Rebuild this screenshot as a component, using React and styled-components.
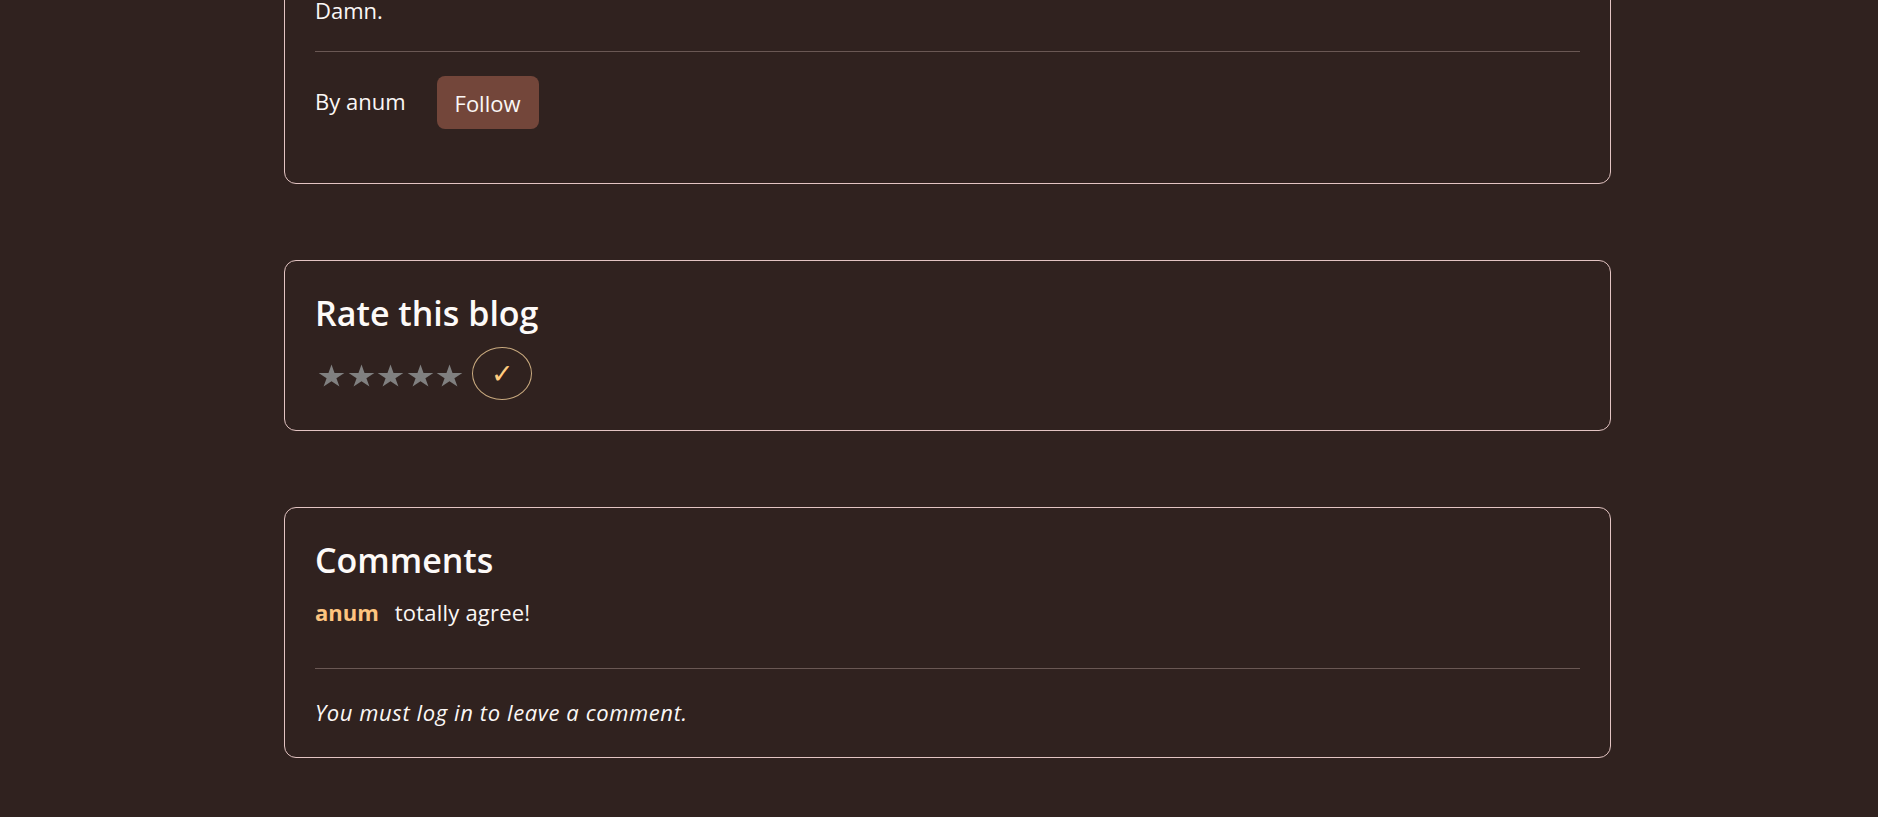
import React from "react";
import styled, { createGlobalStyle } from "styled-components";

const Global = createGlobalStyle`
  html, body {
    margin: 0;
    padding: 0;
    background: #30221f;
  }
  body {
    font-family: "Open Sans", "Noto Sans", "DejaVu Sans", sans-serif;
    color: #fbf7f5;
    font-size: 22px;
    line-height: 30px;
  }
`;

const Page = styled.main`
  display: flex;
  flex-direction: column;
  gap: 76px;
  width: 1327px;
  margin-left: 284px;
  padding-bottom: 60px;
`;

const Card = styled.section`
  box-sizing: border-box;
  border: 1px solid #e3c4c2;
  border-radius: 12px;
  padding: 30px;
  display: flex;
  flex-direction: column;
  margin-top: ${(p) => (p.$scrolled ? "-36px" : "0")};
`;

const BodyText = styled.p`
  margin: ${(p) => p.$margin || "0"};
  font-size: 22px;
  line-height: 30px;
  font-style: ${(p) => (p.$italic ? "italic" : "normal")};
  letter-spacing: ${(p) => (p.$italic ? "0.6px" : "normal")};
`;

const Divider = styled.hr`
  border: 0;
  height: 1px;
  background: #6a5854;
  margin: ${(p) => p.$margin};
`;

const AuthorRow = styled.div`
  display: flex;
  align-items: center;
  gap: 31px;
  margin: 24px 0 24px;
`;

const ByLine = styled.span`
  font-size: 22px;
  line-height: 30px;
  margin-bottom: 4px;
`;

const FollowButton = styled.button`
  font-family: inherit;
  font-size: 22px;
  line-height: 30px;
  color: #fbf7f5;
  background: #73463a;
  border: 0;
  border-radius: 8px;
  padding: 12px 18px 11px;
  cursor: pointer;
`;

const Heading = styled.h2`
  margin: 0;
  font-size: 34px;
  line-height: 45px;
  font-weight: 600;
  color: #fdfaf8;
`;

const RatingRow = styled.div`
  display: flex;
  align-items: center;
  margin-top: 11px;
`;

const Stars = styled.div`
  display: flex;
  gap: 2.6px;
  padding-left: 3px;
  margin-top: 4px;
  margin-right: 9px;
`;

const StarIcon = styled.svg`
  width: 27px;
  height: 23px;
  display: block;
  fill: #808080;
`;

const SubmitButton = styled.button`
  box-sizing: border-box;
  width: 60px;
  height: 53px;
  border-radius: 50%;
  border: 1px solid #c9aa7f;
  background: transparent;
  color: #ffcc80;
  font-family: "DejaVu Sans", sans-serif;
  font-size: 27px;
  font-weight: 700;
  line-height: 1;
  display: flex;
  align-items: center;
  justify-content: center;
  padding: 0;
  cursor: pointer;
`;

const CommentRow = styled.div`
  display: flex;
  align-items: baseline;
  gap: 16px;
  margin-top: 14px;
  font-size: 22px;
  line-height: 30px;
`;

const CommentAuthor = styled.strong`
  font-weight: 700;
  color: #fdc47f;
`;

const CommentText = styled.span`
  letter-spacing: 0.2px;
`;

const Star = () => (
  <StarIcon viewBox="0 0 24 22.5" preserveAspectRatio="none">
    <polygon points="12,0.4 14.69,8.69 23.41,8.69 16.36,13.82 19.05,22.11 12,16.98 4.95,22.11 7.64,13.82 0.59,8.69 9.31,8.69" />
  </StarIcon>
);

export default function App() {
  return (
    <>
      <Global />
      <Page>
        <Card $scrolled>
          <BodyText>Damn.</BodyText>
          <Divider $margin="26px 0 0" />
          <AuthorRow>
            <ByLine>By anum</ByLine>
            <FollowButton>Follow</FollowButton>
          </AuthorRow>
        </Card>

        <Card>
          <Heading>Rate this blog</Heading>
          <RatingRow>
            <Stars>
              {[0, 1, 2, 3, 4].map((i) => (
                <Star key={i} />
              ))}
            </Stars>
            <SubmitButton>✓</SubmitButton>
          </RatingRow>
        </Card>

        <Card>
          <Heading>Comments</Heading>
          <CommentRow>
            <CommentAuthor>anum</CommentAuthor>
            <CommentText>totally agree!</CommentText>
          </CommentRow>
          <Divider $margin="41px 0 0" />
          <BodyText $italic $margin="28px 0 0">
            You must log in to leave a comment.
          </BodyText>
        </Card>
      </Page>
    </>
  );
}
